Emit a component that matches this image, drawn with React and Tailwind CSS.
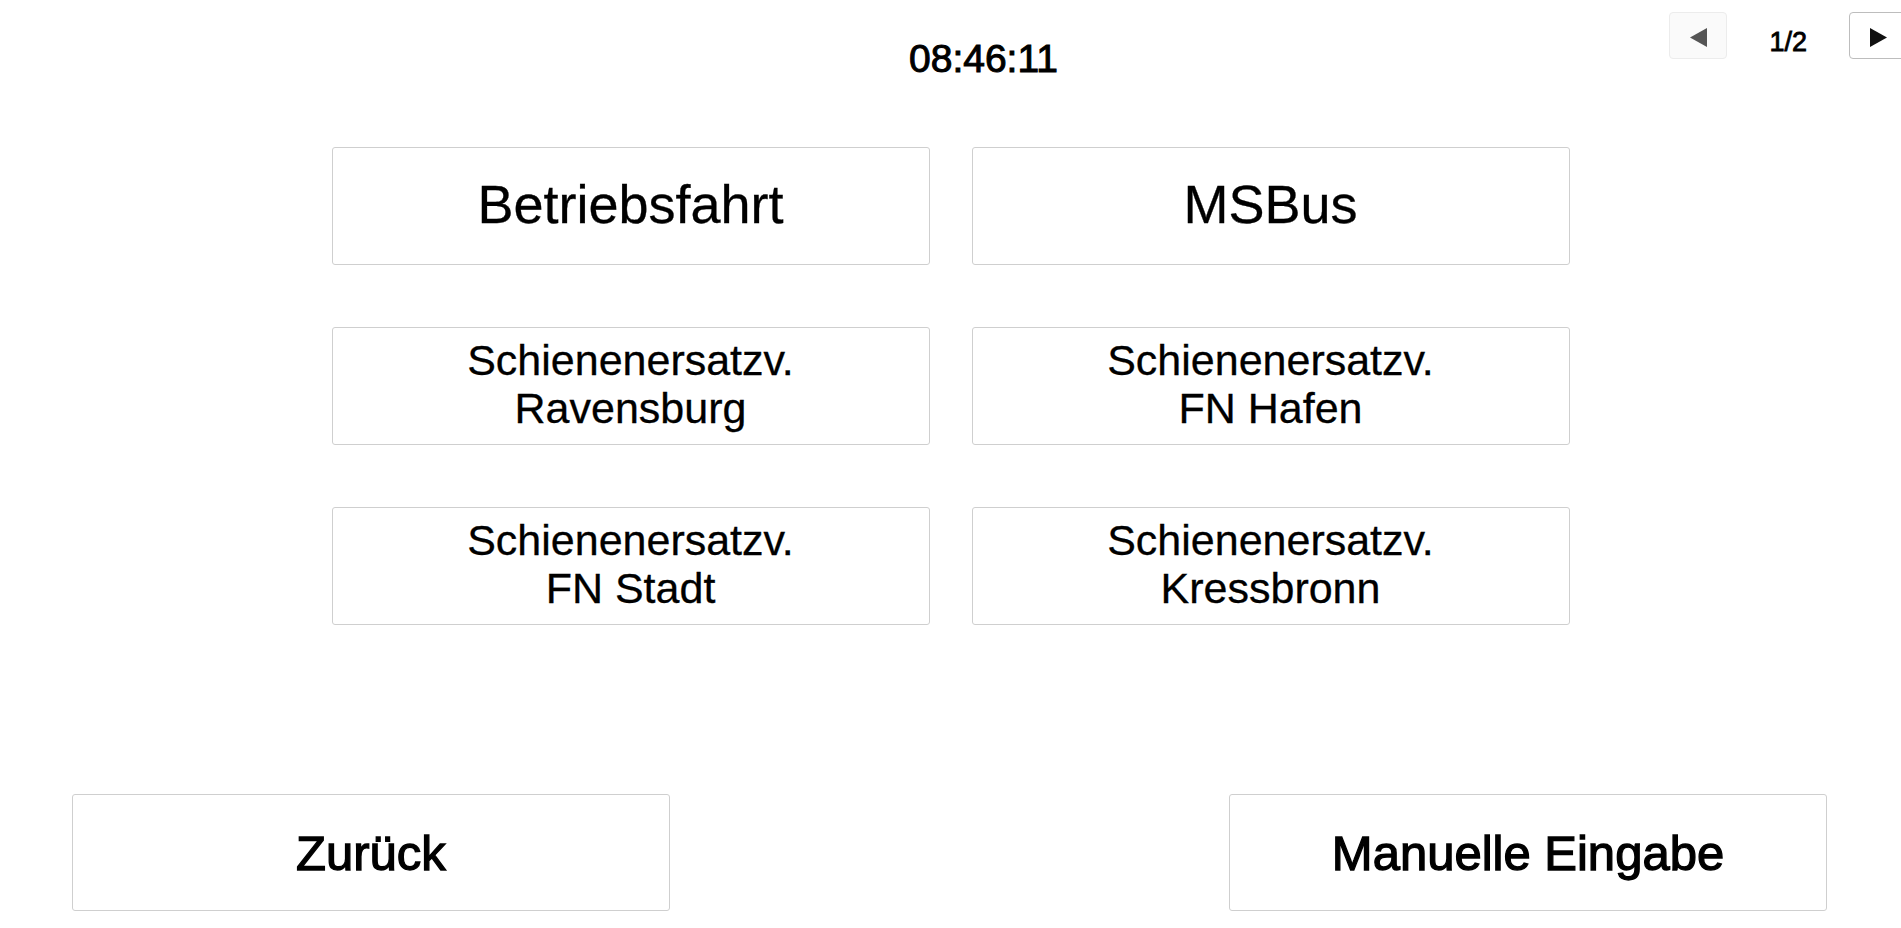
import React from "react";

const tiles = [
  { lines: ["Betriebsfahrt"] },
  { lines: ["MSBus"] },
  { lines: ["Schienenersatzv.", "Ravensburg"] },
  { lines: ["Schienenersatzv.", "FN Hafen"] },
  { lines: ["Schienenersatzv.", "FN Stadt"] },
  { lines: ["Schienenersatzv.", "Kressbronn"] },
];

function Tile({ lines }) {
  const single = lines.length === 1;
  return (
    <button
      type="button"
      className={
        single
          ? "h-[118px] w-[598px] rounded-[3px] border border-[#cfcfcf] bg-white text-[54px] leading-[60px] pb-[5px] text-black flex items-center justify-center [-webkit-text-stroke:0.3px_black]"
          : "h-[118px] w-[598px] rounded-[3px] border border-[#cfcfcf] bg-white text-[43px] leading-[48px] pb-[5px] text-black flex flex-col items-center justify-center [-webkit-text-stroke:0.3px_black]"
      }
    >
      {lines.map((l) => (
        <span key={l}>{l}</span>
      ))}
    </button>
  );
}

function Arrow({ dir, color }) {
  return (
    <svg width="17" height="19" viewBox="0 0 17 19">
      {dir === "left" ? (
        <polygon points="17,0 17,19 0,9.5" fill={color} />
      ) : (
        <polygon points="0,0 0,19 17,9.5" fill={color} />
      )}
    </svg>
  );
}

export default function App() {
  return (
    <div className="w-full h-[928px] overflow-hidden bg-white text-black font-['Liberation_Sans',Arial,sans-serif]">
      {/* header */}
      <div className="flex items-start pt-[12px]">
        <div className="ml-[909px] mt-[25px] text-[39px] leading-[44px] [-webkit-text-stroke:1px_black]">
          08:46:11
        </div>
        <div className="ml-auto -mr-[6px] flex items-start gap-[42px]">
          <button
            type="button"
            className="h-[47px] w-[58px] rounded-[4px] border border-[#ececec] bg-[#fafafa] flex items-center justify-center pt-[3px]"
          >
            <Arrow dir="left" color="#555555" />
          </button>
          <span className="mt-[17px] text-[27px] leading-[27px] [-webkit-text-stroke:0.8px_black]">1/2</span>
          <button
            type="button"
            className="h-[47px] w-[58px] rounded-[4px] border border-[#bdbdbd] bg-white flex items-center justify-center pt-[3px]"
          >
            <Arrow dir="right" color="#111111" />
          </button>
        </div>
      </div>

      {/* destinations */}
      <div className="mt-[66px] grid grid-cols-[598px_598px] gap-x-[42px] gap-y-[62px] justify-center">
        {tiles.map((t, i) => (
          <Tile key={i} lines={t.lines} />
        ))}
      </div>

      {/* footer */}
      <div className="mt-[169px] flex justify-between pl-[72px] pr-[74px]">
        <button
          type="button"
          className="h-[117px] w-[598px] rounded-[3px] border border-[#cfcfcf] bg-white text-[49px] leading-[56px] [-webkit-text-stroke:1.3px_black]"
        >
          Zurück
        </button>
        <button
          type="button"
          className="h-[117px] w-[598px] rounded-[3px] border border-[#cfcfcf] bg-white text-[49px] leading-[56px] [-webkit-text-stroke:1.3px_black]"
        >
          Manuelle Eingabe
        </button>
      </div>
    </div>
  );
}
